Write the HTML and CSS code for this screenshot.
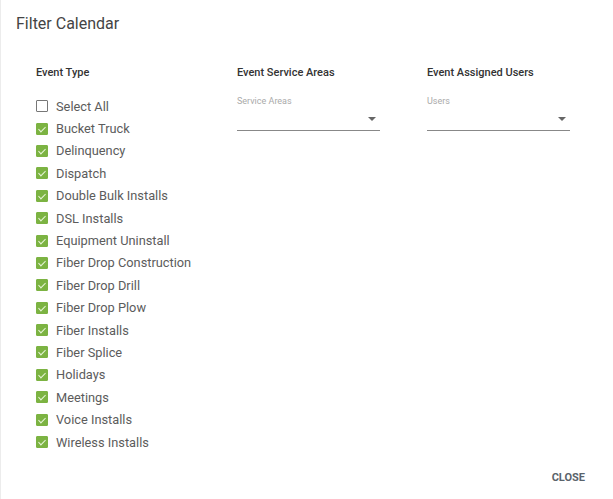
FILE: index.html
```html
<!DOCTYPE html>
<html lang="en">
<head>
  <meta charset="UTF-8" />
  <meta name="viewport" content="width=device-width, initial-scale=1.0" />
  <title>Filter Calendar</title>
  <link rel="stylesheet" href="styles.css">
</head>
<body>

  <div class="dialog">
    <h2 class="dialogTitle">Filter Calendar</h2>

    <div class="filterGrid">
      <!-- Event types -->
      <div class="filterCol">
        <div class="colHead">Event Type</div>
        <ul class="checkList">
          <li><span class="box"></span>Select All</li>
          <li><span class="box checked"></span>Bucket Truck</li>
          <li><span class="box checked"></span>Delinquency</li>
          <li><span class="box checked"></span>Dispatch</li>
          <li><span class="box checked"></span>Double Bulk Installs</li>
          <li><span class="box checked"></span>DSL Installs</li>
          <li><span class="box checked"></span>Equipment Uninstall</li>
          <li><span class="box checked"></span>Fiber Drop Construction</li>
          <li><span class="box checked"></span>Fiber Drop Drill</li>
          <li><span class="box checked"></span>Fiber Drop Plow</li>
          <li><span class="box checked"></span>Fiber Installs</li>
          <li><span class="box checked"></span>Fiber Splice</li>
          <li><span class="box checked"></span>Holidays</li>
          <li><span class="box checked"></span>Meetings</li>
          <li><span class="box checked"></span>Voice Installs</li>
          <li><span class="box checked"></span>Wireless Installs</li>
        </ul>
      </div>

      <!-- Service areas -->
      <div class="filterCol">
        <div class="colHead">Event Service Areas</div>
        <div class="selectField">
          <div class="selectLabel">Service Areas</div>
          <div class="selectLine"><span class="arrow"></span></div>
        </div>
      </div>

      <!-- Users -->
      <div class="filterCol">
        <div class="colHead">Event Assigned Users</div>
        <div class="selectField">
          <div class="selectLabel">Users</div>
          <div class="selectLine"><span class="arrow"></span></div>
        </div>
      </div>
    </div>

    <div class="dialogActions">
      <button class="closeBtn">Close</button>
    </div>
  </div>

</body>
</html>
```

FILE: styles.css
```css
body {
  margin: 0;
  background: #fff;
  font-family: Roboto, "Liberation Sans", sans-serif;
}

.dialog {
  height: 499px;
  box-sizing: border-box;
  border-left: 1px solid #ececec;
  padding: 14px 0 0 15px;
  position: relative;
}

.dialogTitle {
  margin: 0;
  font-size: 16px;
  font-weight: 400;
  line-height: 20px;
  color: #444;
}

.filterGrid {
  display: grid;
  grid-template-columns: 201px 190px 186px;
  padding: 32px 0 0 20px;
}

.colHead {
  font-size: 11px;
  font-weight: 500;
  color: #333;
  line-height: 14px;
  height: 27px;
}

.checkList {
  list-style: none;
  margin: 0;
  padding: 2px 0 0;
}

.checkList li {
  display: flex;
  align-items: center;
  height: 22.4px;
  font-size: 12.8px;
  color: #5c5c5c;
}

.box {
  width: 10px;
  height: 10px;
  border: 1px solid #777;
  border-radius: 1px;
  margin-right: 8px;
  position: relative;
}

.box.checked {
  background: #7cb342;
  border-color: #7cb342;
}

.box.checked::after {
  content: "";
  position: absolute;
  left: 3px;
  top: 1px;
  width: 3px;
  height: 6px;
  border: solid #e8f5d8;
  border-width: 0 1px 1px 0;
  transform: rotate(45deg);
}

.selectField {
  width: 143px;
  padding-top: 2px;
}

.selectLabel {
  font-size: 9px;
  color: #aaa;
  line-height: 12px;
}

.selectLine {
  height: 23px;
  border-bottom: 1px solid #888;
  position: relative;
}

.arrow {
  position: absolute;
  right: 4px;
  top: 10px;
  border-left: 4px solid transparent;
  border-right: 4px solid transparent;
  border-top: 4px solid #666;
}

.dialogActions {
  position: absolute;
  right: 28px;
  bottom: 14px;
}

.closeBtn {
  background: none;
  border: none;
  padding: 0;
  font-family: Roboto, "Liberation Sans", sans-serif;
  font-size: 11px;
  font-weight: 700;
  text-transform: uppercase;
  color: #5a636b;
  cursor: pointer;
}
```
